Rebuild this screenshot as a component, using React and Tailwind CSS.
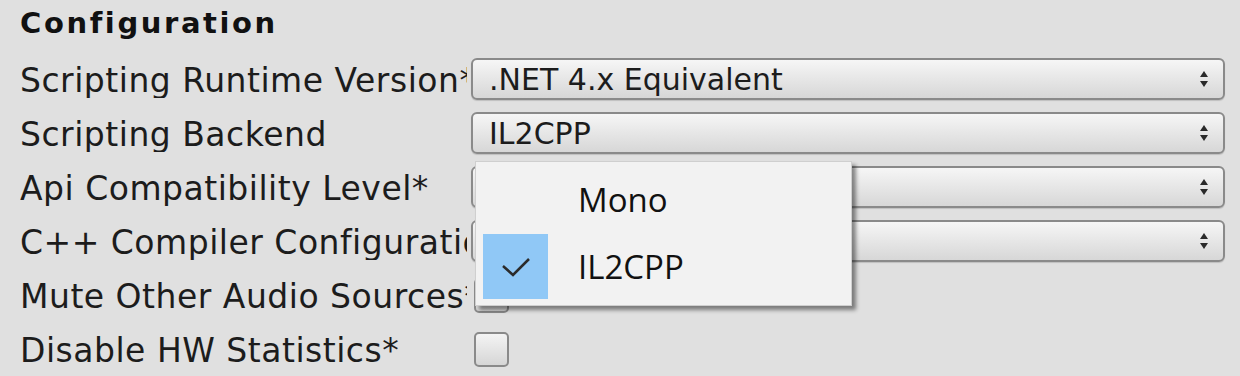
import React from "react";

const labelFont = { fontFamily: '"DejaVu Sans", Verdana, sans-serif' };

function Arrows() {
  return (
    <svg width="10" height="18" viewBox="0 0 10 18" className="shrink-0">
      <path d="M5 1 L9 7 L1 7 Z" fill="#2a2a2a" />
      <path d="M5 17 L9 11 L1 11 Z" fill="#2a2a2a" />
    </svg>
  );
}

function Dropdown({ value }) {
  return (
    <div className="flex h-[42px] flex-1 items-center justify-between rounded-[6px] border-2 border-[#8a8a8a] bg-gradient-to-b from-[#f6f6f6] to-[#d7d7d7] pl-[16px] pr-[14px] shadow-[0_1px_1px_rgba(0,0,0,0.15)]">
      <span className="pt-[2px] text-[30px] leading-none text-[#1c1c1c]" style={labelFont}>
        {value}
      </span>
      <Arrows />
    </div>
  );
}

function Checkbox() {
  return (
    <div className="ml-[3px] h-[35px] w-[35px] rounded-[5px] border-2 border-[#8a8a8a] bg-gradient-to-b from-[#f4f4f4] to-[#d6d6d6]" />
  );
}

function Row({ label, children }) {
  return (
    <div className="flex h-[42px] items-center">
      <div className="w-[451px] shrink-0 pt-[3px]">
        <div className="w-[447px] overflow-hidden whitespace-nowrap">
          <span className="text-[33px] leading-none tracking-[0.5px] text-[#1c1c1c]" style={labelFont}>
            {label}
          </span>
        </div>
      </div>
      {children}
    </div>
  );
}

export default function App() {
  return (
    <div className="relative h-[376px] w-[1240px] overflow-hidden bg-[#e0e0e0]">
      <div className="flex flex-col pl-[20px] pr-[15px]">
        <div className="flex h-[46px] items-center">
          <span className="text-[29px] font-bold leading-none tracking-[2.6px] text-[#111]" style={labelFont}>
            Configuration
          </span>
        </div>
        <div className="mt-[12px] flex flex-col gap-[12px]">
          <Row label="Scripting Runtime Version*">
            <Dropdown value=".NET 4.x Equivalent" />
          </Row>
          <Row label="Scripting Backend">
            <Dropdown value="IL2CPP" />
          </Row>
          <Row label="Api Compatibility Level*">
            <Dropdown value="" />
          </Row>
          <Row label="C++ Compiler Configuration">
            <Dropdown value="" />
          </Row>
          <Row label="Mute Other Audio Sources*">
            <Checkbox />
          </Row>
          <Row label="Disable HW Statistics*">
            <Checkbox />
          </Row>
        </div>
      </div>

      {/* Popup menu */}
      <div
        className="absolute left-[475px] top-[161px] flex h-[145px] w-[377px] flex-col border border-[#cfcfcf] bg-[#f2f2f2] px-[7px] py-[7px] shadow-[4px_4px_4px_rgba(0,0,0,0.45)]"
        style={{ fontFamily: '"Open Sans", "Noto Sans", sans-serif' }}
      >
        <div className="flex h-[65px] items-center">
          <div className="h-[65px] w-[65px] shrink-0" />
          <span className="ml-[30px] pb-[4px] text-[33px] leading-none text-[#111]">Mono</span>
        </div>
        <div className="flex h-[65px] items-center">
          <div className="flex h-[65px] w-[65px] shrink-0 items-center justify-center bg-[#90c8f6]">
            <svg width="30" height="22" viewBox="0 0 30 22">
              <path d="M2 10 L12 19 L28 3" fill="none" stroke="#2b2b2b" strokeWidth="2.5" />
            </svg>
          </div>
          <span className="ml-[30px] text-[33px] leading-none text-[#111]">IL2CPP</span>
        </div>
      </div>
    </div>
  );
}
